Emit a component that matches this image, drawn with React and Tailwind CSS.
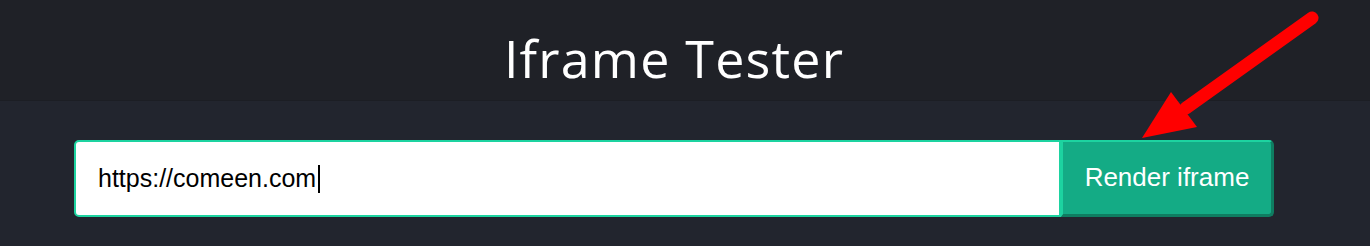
export default function App() {
  return (
    <div className="relative h-[246px] w-full overflow-hidden bg-[#22252e]">
      <header className="h-[100px] bg-[#1f2127] shadow-[0_1px_0_#1c1e24]">
        <div className="flex h-full w-[1348px] items-center justify-center pt-[16px]">
          <h1
            className="text-[52px] font-normal leading-none tracking-[1.2px] text-white"
            style={{ fontFamily: '"Open Sans", "Liberation Sans", sans-serif' }}
          >
            Iframe Tester
          </h1>
        </div>
      </header>

      <div className="w-[1348px]">
        <main className="mx-auto flex w-[1200px] pt-[40px]">
          <div className="flex h-[77px] flex-1 items-center rounded-l-[5px] border-2 border-[#1dd3a0] bg-white pl-[22px] font-['Liberation_Sans',Arial,sans-serif] text-[25px] text-black">
            <span>https://comeen.com</span>
            <span className="ml-[2px] h-[28px] w-[2px] bg-black" />
          </div>
          <button
            type="button"
            className="h-[77px] w-[213px] rounded-r-[5px] border-t-2 border-l-2 border-r-[3px] border-b-[3px] border-t-[#1dd3a0] border-l-[#1dd3a0] border-r-[#0f7d61] border-b-[#0f7d61] bg-[#14ab85] pb-[1px] font-['Liberation_Sans',Arial,sans-serif] text-[26px] text-white"
          >
            Render iframe
          </button>
        </main>
      </div>

      <svg className="pointer-events-none absolute left-0 top-0" width="1370" height="246" viewBox="0 0 1370 246">
        <line x1="1312" y1="18" x2="1186" y2="108" stroke="#ff0000" strokeWidth="13" strokeLinecap="round" />
        <polygon points="1142,138 1171,92 1197,127" fill="#ff0000" />
      </svg>
    </div>
  )
}
